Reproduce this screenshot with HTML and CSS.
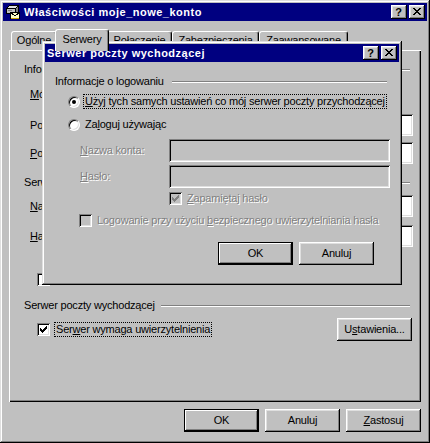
FILE: index.html
```html
<!DOCTYPE html>
<html lang="pl">
<head>
<meta charset="utf-8">
<title>Właściwości moje_nowe_konto</title>
<link rel="stylesheet" href="styles.css">
</head>
<body>
<div class="window">
  <div class="titlebar">
    <svg class="app-icon" width="16" height="16" viewBox="0 0 16 16" shape-rendering="crispEdges">
      <path d="M1.5 4.5L4.5 1.5H13.5L10.5 4.5Z" fill="#e0e0e0" stroke="#000"/>
      <path d="M10.5 4.5L13.5 1.5V7.5L10.5 10.5Z" fill="#808080" stroke="#000"/>
      <rect x="1.5" y="4.5" width="9" height="5" fill="#c0c0c0" stroke="#000"/>
      <rect x="3" y="6" width="4" height="1" fill="#808080"/>
      <rect x="5.5" y="8.5" width="9" height="6" fill="#ffffc8" stroke="#000"/>
      <path d="M5.5 8.5L10 12L14.5 8.5" fill="none" stroke="#000"/>
      <rect x="6" y="14" width="8" height="1" fill="#c8a000"/>
    </svg>
    <span class="title">Właściwości moje_nowe_konto</span>
    <div class="title-buttons">
      <span class="tbtn tbtn-help">?</span>
      <span class="tbtn">
        <svg width="8" height="7" viewBox="0 0 8 7" shape-rendering="crispEdges"><path d="M0 0h2v1H0zM6 0h2v1H6zM1 1h2v1H1zM5 1h2v1H5zM2 2h4v1H2zM3 3h2v1H3zM2 4h4v1H2zM1 5h2v1H1zM5 5h2v1H5zM0 6h2v1H0zM6 6h2v1H6z" fill="#000"/></svg>
      </span>
    </div>
  </div>

  <div class="tabs">
    <div class="tab tab-general">Ogólne</div>
    <div class="tab tab-servers active">Serwery</div>
    <div class="tab tab-connection">Połączenie</div>
    <div class="tab tab-security">Zabezpieczenia</div>
    <div class="tab tab-advanced">Zaawansowane</div>
  </div>

  <div class="panel">
    <div class="group"><span>Informacje o serwerze</span><span class="line"></span></div>
    <div class="note"><u>M</u>ój serwer poczty przychodzącej to serwer POP3.</div>
    <div class="field-row field-first"><span class="field-label">Poczta przychodząca (P<u>O</u>P3):</span><span class="textbox"></span></div>
    <div class="field-row field-next"><span class="field-label"><u>P</u>oczta wychodząca (SMTP):</span><span class="textbox"></span></div>
    <div class="group group-incoming"><span>Serwer poczty przychodzącej</span><span class="line"></span></div>
    <div class="field-row field-account"><span class="field-label"><u>N</u>azwa konta:</span><span class="textbox"></span></div>
    <div class="field-row field-password"><span class="field-label"><u>H</u>asło:</span><span class="textbox"></span></div>
    <div class="check-row check-remember"><span class="checkbox"></span><span class="check-label">Zapamię<u>t</u>aj hasło</span></div>
    <div class="group group-outgoing"><span>Serwer poczty wychodzącej</span><span class="line"></span></div>
    <div class="auth-row">
      <span class="checkbox checked">
        <svg width="7" height="7" viewBox="0 0 7 7" shape-rendering="crispEdges"><path d="M6 0h1v1H6zM5 1h2v1H5zM0 2h1v1H0zM4 2h3v1H4zM0 3h2v1H0zM3 3h3v1H3zM0 4h5v1H0zM1 5h3v1H1zM2 6h1v1H2z" fill="#000"/></svg>
      </span>
      <span class="check-label focus">Ser<u>w</u>er wymaga uwierzytelnienia</span>
      <button class="btn btn-settings">U<u>s</u>tawienia...</button>
    </div>
  </div>

  <div class="footer">
    <button class="btn default">OK</button>
    <button class="btn">Anuluj</button>
    <button class="btn"><u>Z</u>astosuj</button>
  </div>

  <div class="dialog">
    <div class="titlebar dialog-titlebar">
      <span class="title">Serwer poczty wychodzącej</span>
      <div class="title-buttons">
        <span class="tbtn tbtn-help">?</span>
        <span class="tbtn">
          <svg width="8" height="7" viewBox="0 0 8 7" shape-rendering="crispEdges"><path d="M0 0h2v1H0zM6 0h2v1H6zM1 1h2v1H1zM5 1h2v1H5zM2 2h4v1H2zM3 3h2v1H3zM2 4h4v1H2zM1 5h2v1H1zM5 5h2v1H5zM0 6h2v1H0zM6 6h2v1H6z" fill="#000"/></svg>
        </span>
      </div>
    </div>
    <div class="dialog-body">
      <div class="group"><span>Informacje o logowaniu</span><span class="line"></span></div>
      <div class="radio-row radio-first"><span class="radio checked"></span><span class="check-label focus"><u>U</u>żyj tych samych ustawień co mój serwer poczty przychodzącej</span></div>
      <div class="radio-row radio-next"><span class="radio"></span><span class="check-label">Za<u>l</u>oguj używając</span></div>
      <div class="login-row login-first"><span class="login-label disabled"><u>N</u>azwa konta:</span><span class="textbox disabled-box"></span></div>
      <div class="login-row login-next"><span class="login-label disabled"><u>H</u>asło:</span><span class="textbox disabled-box"></span></div>
      <div class="check-row dialog-remember">
        <span class="checkbox disabled-box">
          <svg width="7" height="7" viewBox="0 0 7 7" shape-rendering="crispEdges"><path d="M6 0h1v1H6zM5 1h2v1H5zM0 2h1v1H0zM4 2h3v1H4zM0 3h2v1H0zM3 3h3v1H3zM0 4h5v1H0zM1 5h3v1H1zM2 6h1v1H2z" fill="#808080"/></svg>
        </span>
        <span class="check-label disabled"><u>Z</u>apamiętaj hasło</span>
      </div>
      <div class="check-row dialog-secure"><span class="checkbox disabled-box"></span><span class="check-label disabled">Logowanie przy użyciu <u>b</u>ezpiecznego uwierzytelniania hasła</span></div>
      <div class="dialog-actions">
        <button class="btn default">OK</button>
        <button class="btn">Anuluj</button>
      </div>
    </div>
  </div>
</div>
</body>
</html>
```

FILE: styles.css
```css
* { box-sizing: border-box; }
html, body { margin: 0; padding: 0; }
body {
  width: 430px;
  height: 443px;
  overflow: hidden;
  background: #c0c0c0;
  font-family: "Liberation Sans", Arial, sans-serif;
  font-size: 11px;
  line-height: 13px;
  letter-spacing: -0.2px;
  color: #000;
}
u { text-decoration: underline; text-underline-offset: 1px; }

.window {
  position: relative;
  width: 430px;
  height: 443px;
  padding: 3px;
  background: #c0c0c0;
  box-shadow: inset -1px -1px #000, inset 1px 1px #dfdfdf, inset -2px -2px #808080, inset 2px 2px #fff;
  display: flex;
  flex-direction: column;
}

.titlebar {
  flex-shrink: 0;
  height: 18px;
  background: #000080;
  color: #fff;
  display: flex;
  align-items: center;
}
.app-icon { margin-left: 2px; flex-shrink: 0; }
.title {
  margin-left: 3px;
  font-weight: bold;
  letter-spacing: 0.5px;
  white-space: nowrap;
}
.title-buttons {
  margin-left: auto;
  margin-right: 2px;
  display: flex;
  gap: 2px;
}
.tbtn {
  width: 16px;
  height: 14px;
  background: #c0c0c0;
  box-shadow: inset -1px -1px #000, inset 1px 1px #fff, inset -2px -2px #808080, inset 2px 2px #dfdfdf;
  display: flex;
  align-items: center;
  justify-content: center;
  padding: 0 1px 1px 0;
  color: #000;
  letter-spacing: 0;
}
.tbtn-help { font-weight: bold; font-size: 11px; line-height: 12px; }

/* tabs */
.tabs {
  flex-shrink: 0;
  height: 21px;
  margin-top: 8px;
  padding-left: 8px;
  display: flex;
  align-items: flex-end;
}
.tab {
  height: 19px;
  border: 1px solid;
  border-bottom: 0;
  border-color: #fff #000 transparent #fff;
  border-radius: 3px 3px 0 0;
  box-shadow: inset -1px 0 #808080;
  display: flex;
  align-items: center;
  justify-content: center;
  padding-bottom: 1px;
  white-space: nowrap;
  background: #c0c0c0;
}
.tab-general { width: 46px; }
.tab-servers { width: 50px; }
.tab-connection { width: 65px; }
.tab-security { width: 87px; }
.tab-advanced { width: 89px; }
.tab.active {
  position: relative;
  z-index: 1;
  width: 54px;
  height: 22px;
  margin: 0 -2px -1px;
  padding-bottom: 3px;
}

/* panel */
.panel {
  flex-shrink: 0;
  height: 352px;
  margin: 0 6px;
  padding: 13px 8px 0 15px;
  box-shadow: inset 1px 1px #fff, inset -1px -1px #000, inset -2px -2px #808080;
  display: flex;
  flex-direction: column;
}
.group {
  height: 13px;
  display: flex;
  align-items: center;
  white-space: nowrap;
}
.panel .group { margin-right: 3px; }
.line {
  flex: 1;
  height: 2px;
  margin-left: 6px;
  border-top: 1px solid #808080;
  border-bottom: 1px solid #fff;
}
.dialog-body .line { margin-left: 8px; }
.note { margin: 12px 0 0 6px; height: 13px; white-space: nowrap; }
.field-row {
  height: 22px;
  margin-left: 6px;
  display: flex;
  align-items: center;
}
.field-label { flex: 1; white-space: nowrap; }
.field-row .textbox { width: 213px; height: 22px; }
.field-first { margin-top: 13px; }
.field-next { margin-top: 6px; }
.group-incoming { margin-top: 12px; }
.field-account { margin-top: 6px; }
.field-password { margin-top: 8px; }
.check-remember { margin: 26px 0 0 13px; }
.group-outgoing { margin-top: 13px; }

.textbox {
  display: block;
  flex-shrink: 0;
  background: #fff;
  box-shadow: inset 1px 1px #808080, inset -1px -1px #fff, inset 2px 2px #000, inset -2px -2px #dfdfdf;
}
.disabled-box { background: #c0c0c0; }

.check-row { height: 13px; display: flex; align-items: center; white-space: nowrap; }
.checkbox {
  flex-shrink: 0;
  width: 13px;
  height: 13px;
  background: #fff;
  box-shadow: inset 1px 1px #808080, inset -1px -1px #fff, inset 2px 2px #000, inset -2px -2px #dfdfdf;
  display: flex;
  align-items: center;
  justify-content: center;
}
.checkbox.disabled-box { background: #c0c0c0; }
.check-label {
  margin-left: 3px;
  padding: 0 1px;
  border: 1px solid transparent;
  line-height: 13px;
  white-space: nowrap;
}
.check-label.focus { border: 1px dotted #000; }

.auth-row {
  height: 23px;
  margin: 6px 1px 0 13px;
  display: flex;
  align-items: center;
}
.auth-row .check-label { margin-left: 4px; }
.btn-settings { margin-left: auto; width: 93px; }

.disabled { color: #808080; text-shadow: 1px 1px 0 #fff; }

/* buttons */
.btn {
  width: 75px;
  height: 23px;
  padding: 0;
  border: 0;
  background: #c0c0c0;
  font: inherit;
  letter-spacing: -0.2px;
  color: #000;
  box-shadow: inset -1px -1px #000, inset 1px 1px #fff, inset -2px -2px #808080, inset 2px 2px #dfdfdf;
  display: flex;
  align-items: center;
  justify-content: center;
}
.btn.default {
  box-shadow: inset 0 0 0 1px #000, inset -2px -2px #000, inset 2px 2px #fff, inset -3px -3px #808080;
}
.footer {
  margin-top: 7px;
  padding-right: 6px;
  display: flex;
  justify-content: flex-end;
  gap: 6px;
}

/* modal dialog */
.dialog {
  position: absolute;
  left: 42px;
  top: 41px;
  width: 360px;
  height: 244px;
  padding: 3px;
  background: #c0c0c0;
  box-shadow: inset -1px -1px #000, inset 1px 1px #dfdfdf, inset -2px -2px #808080, inset 2px 2px #fff;
  display: flex;
  flex-direction: column;
}
.dialog-titlebar .title { margin-left: 2px; }
.dialog-body {
  padding: 13px 12px 0 10px;
  display: flex;
  flex-direction: column;
}
.radio-row { height: 15px; margin-left: 13px; display: flex; align-items: center; }
.radio-first { margin-top: 6px; }
.radio-next { margin-top: 8px; }
.radio {
  position: relative;
  flex-shrink: 0;
  width: 12px;
  height: 12px;
  border-radius: 50%;
  background: #fff;
  border: 1px solid;
  border-color: #808080 #fff #fff #808080;
  box-shadow: inset 1px 1px #000, inset -1px -1px #dfdfdf;
}
.radio.checked::after {
  content: "";
  position: absolute;
  left: 3px;
  top: 3px;
  width: 4px;
  height: 4px;
  border-radius: 50%;
  background: #000;
}
.login-row { height: 23px; margin-left: 25px; display: flex; align-items: center; }
.login-first { margin-top: 7px; }
.login-next { margin-top: 3px; }
.login-label { width: 89px; flex-shrink: 0; white-space: nowrap; }
.login-row .textbox { width: 221px; height: 23px; }
.dialog-remember { margin: 4px 0 0 114px; }
.dialog-secure { margin: 9px 0 0 24px; }
.dialog-actions {
  margin: 15px 13px 0 0;
  display: flex;
  justify-content: flex-end;
  gap: 6px;
}
```
